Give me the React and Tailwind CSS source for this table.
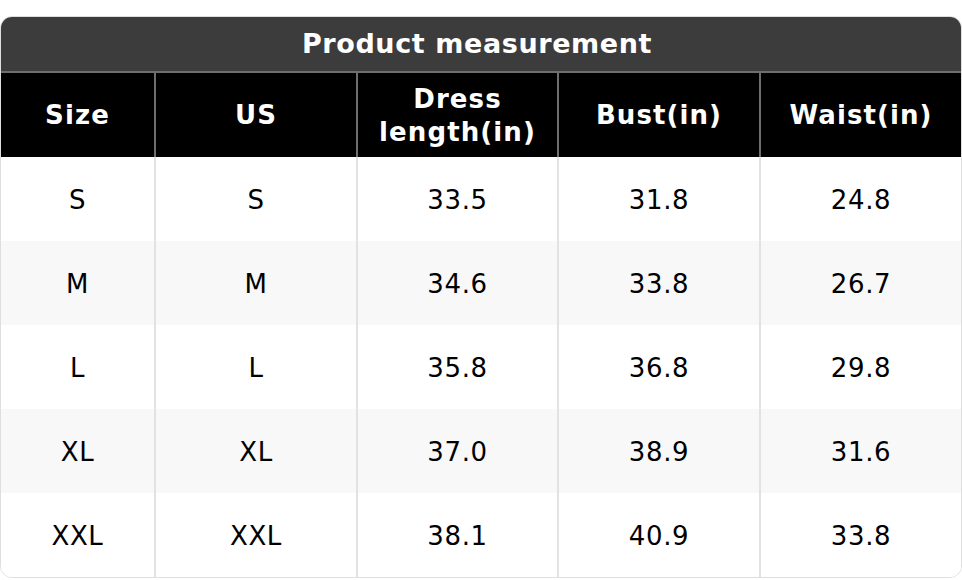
import React from 'react';

const rows = [
  ['S', 'S', '33.5', '31.8', '24.8'],
  ['M', 'M', '34.6', '33.8', '26.7'],
  ['L', 'L', '35.8', '36.8', '29.8'],
  ['XL', 'XL', '37.0', '38.9', '31.6'],
  ['XXL', 'XXL', '38.1', '40.9', '33.8'],
];

const cols = 'grid grid-cols-[153px_202px_201px_202px_1fr]';

export default function App() {
  return (
    <div className="bg-white pt-4 w-[962px] h-[580px]" style={{ fontFamily: '"DejaVu Sans", sans-serif' }}>
      <div className="border-[1.5px] border-[#dedede] rounded-xl overflow-hidden">
        {/* title */}
        <div className="h-[56px] bg-[#3c3c3c] text-white font-bold text-[27px] tracking-[0.6px] pr-2 flex items-center justify-center border-b-2 border-[#6e6e6e]">
          Product measurement
        </div>

        {/* header */}
        <div className={`${cols} h-[84px] bg-black text-white font-bold text-[26px] leading-[33px] tracking-[1.1px] text-center`}>
          <div className="flex items-center justify-center">Size</div>
          <div className="flex items-center justify-center border-l-2 border-[#6e6e6e]">US</div>
          <div className="flex items-center justify-center pt-0.5 border-l-2 border-[#6e6e6e]">Dress<br />length(in)</div>
          <div className="flex items-center justify-center border-l-2 border-[#6e6e6e]">Bust(in)</div>
          <div className="flex items-center justify-center border-l-2 border-[#6e6e6e]">Waist(in)</div>
        </div>

        {/* body */}
        {rows.map((r, i) => (
          <div key={i} className={`${cols} h-[84px] text-[26px] tracking-[0.6px] text-black ${i % 2 ? 'bg-[#f8f8f8]' : 'bg-white'}`}>
            {r.map((c, j) => (
              <div key={j} className={`flex items-center justify-center pt-0.5 ${j ? 'border-l-2 border-[#e2e2e2]' : ''}`}>
                {c}
              </div>
            ))}
          </div>
        ))}
      </div>
    </div>
  );
}
